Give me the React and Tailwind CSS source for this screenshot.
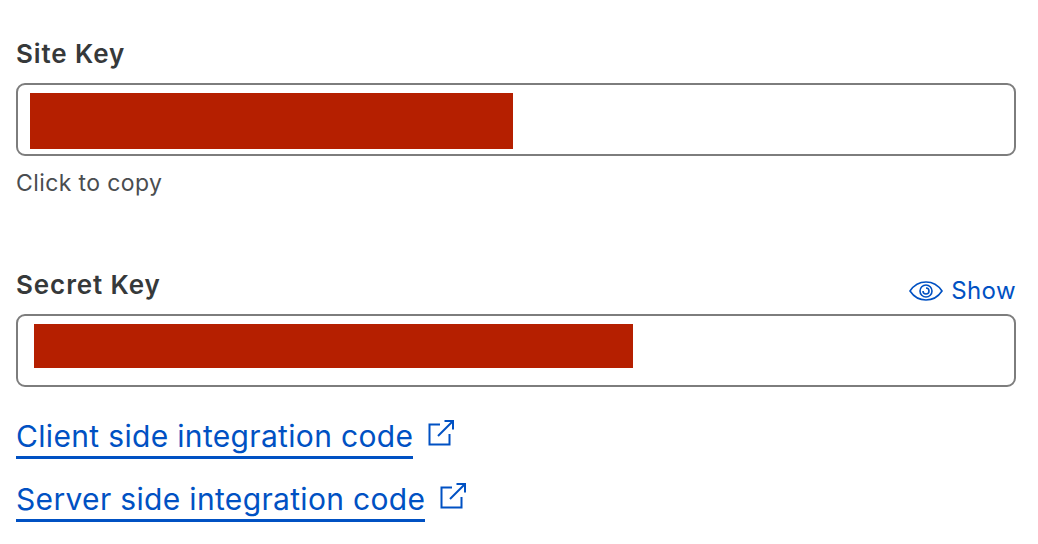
import React from 'react';

const font = "font-['Inter','Liberation_Sans',sans-serif]";

const ExternalIcon = () => (
  <svg width="28" height="28" viewBox="0 0 28 28" fill="none" stroke="#0051c3" strokeWidth="2" className="ml-[14px] mb-[9px] shrink-0">
    <path d="M13 5.5H2.5V25.5H22.5V15" />
    <path d="M11 17L26 2" />
    <path d="M17.5 2H26V10.5" />
  </svg>
);

const EyeIcon = () => (
  <svg width="34" height="22" viewBox="0 0 34 22" fill="none" stroke="#0051c3" strokeWidth="1.6">
    <path d="M1 11C5 5 10.5 2 17 2C23.5 2 29 5 33 11C29 17 23.5 20 17 20C10.5 20 5 17 1 11Z" />
    <circle cx="17" cy="11" r="6" />
    <path d="M14 11a3 3 0 1 0 3 -3" />
  </svg>
);

const App = () => {
  return (
    <div className={`w-[1038px] h-[544px] bg-white px-4 pt-[38px] overflow-hidden ${font}`}>
      <div className="w-[1000px]">
        <div className="text-[26px] leading-[32px] font-semibold text-[#36393a] tracking-[0.9px]">Site Key</div>
        <div className="mt-[13px] h-[73px] border-2 border-[#7d7d7d] rounded-[9px] pl-3 pt-2">
          <div className="w-[483px] h-[56px] bg-[#b51f00]"></div>
        </div>
        <div className="mt-[13px] text-[23px] leading-7 tracking-[0.4px] text-[#4a4d50]">Click to copy</div>

        <div className="mt-[65px] flex justify-between items-end h-[40px]">
          <div className="text-[26px] leading-[32px] font-semibold text-[#36393a] tracking-[0.9px] mb-[1px]">Secret Key</div>
          <div className="flex items-center gap-2 text-[24px] leading-7 tracking-[0.4px] text-[#0051c3] mb-[-3px]">
            <EyeIcon />
            <span>Show</span>
          </div>
        </div>
        <div className="mt-[12px] h-[73px] border-2 border-[#7d7d7d] rounded-[9px] pl-4 pt-2">
          <div className="w-[599px] h-[44px] bg-[#b51f00]"></div>
        </div>

        <div className="mt-[29px] flex flex-col gap-[20px] text-[30px] leading-[40px] tracking-[0.33px] text-[#0051c3]">
          <div className="flex items-center">
            <a className="border-b-[3px] border-[#0051c3]">Client side integration code</a>
            <ExternalIcon />
          </div>
          <div className="flex items-center">
            <a className="border-b-[3px] border-[#0051c3]">Server side integration code</a>
            <ExternalIcon />
          </div>
        </div>
      </div>
    </div>
  );
};

export default App;
